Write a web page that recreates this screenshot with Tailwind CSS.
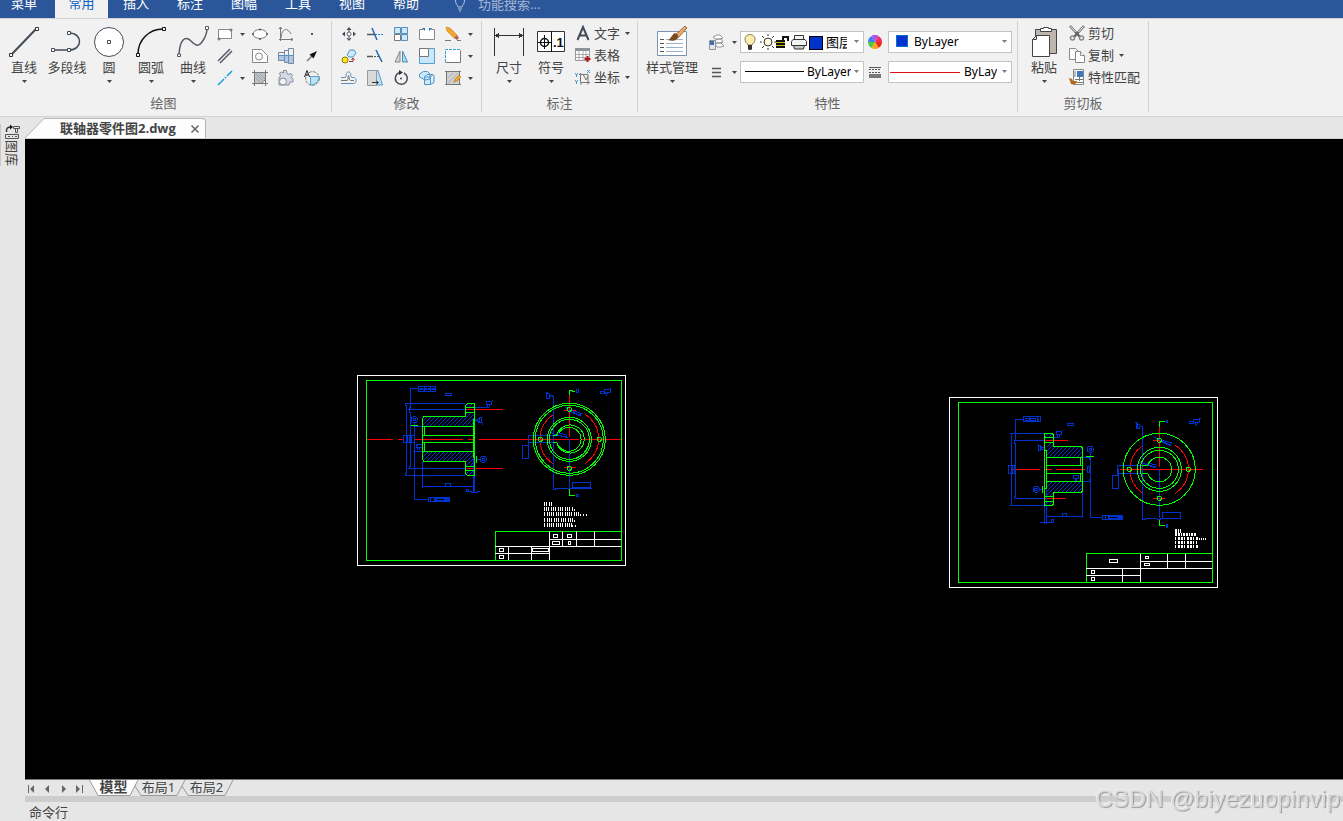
<!DOCTYPE html>
<html lang="zh-CN">

<head>
  <meta charset="UTF-8">
  <meta name="viewport" content="width=device-width, initial-scale=1.0">
  <script src="https://cdn.jsdelivr.net/npm/@tailwindcss/browser@4"></script>
  <title>联轴器零件图2.dwg</title>
</head>

<body class="h-screen flex flex-col overflow-hidden bg-[#e6e6e6] text-[13px] text-[#444] font-['Noto_Sans','Noto_Sans_CJK_SC',sans-serif]">
  <svg class="absolute size-0">
    <symbol id="caret" viewBox="0 0 5 3"><path d="M0 0h5L2.500 3z" fill="#444" /></symbol>
    <pattern id="hatch" width="12" height="12" patternUnits="userSpaceOnUse">
      <path d="M-3 15L15 -3M-3 3L3 -3M9 15L15 9" stroke="#0033cc" stroke-width="3" />
    </pattern>
  </svg>

  <!-- Menu bar -->
  <nav class="h-[18px] shrink-0 flex items-end overflow-hidden bg-[#2b579a] text-white">
    <button class="h-7 w-[55px] pl-[11px] text-left">菜单</button>
    <button class="h-7 w-[53px] mr-px bg-[#f1f1f1] text-[#0f5fc0]">常用</button>
    <button class="h-7 w-[54px]">插入</button>
    <button class="h-7 w-[54px]">标注</button>
    <button class="h-7 w-[54px]">图幅</button>
    <button class="h-7 w-[54px]">工具</button>
    <button class="h-7 w-[54px]">视图</button>
    <button class="h-7 w-[54px]">帮助</button>
    <label class="h-7 ml-[21px] flex items-center gap-3">
      <svg class="w-3 h-4 shrink-0" viewBox="0 0 12 16" fill="none" stroke="#b4c4de"><path d="M4 11C4 9 1.500 8 1.500 5a4.500 4.500 0 0 1 9 0c0 3-2.500 4-2.500 6zM4 13h4M5 15h2" /></svg>
      <input type="text" aria-label="功能搜索" placeholder="功能搜索..." class="w-40 h-7 bg-transparent outline-none placeholder:text-[#a5b6d3]">
    </label>
  </nav>

  <!-- Ribbon -->
  <div class="shrink-0 flex bg-[#f1f1f1] border-t border-b border-[#d2d2d2] h-[99px] pt-[2px] pb-1">

    <!-- Draw -->
    <section class="w-[332px] shrink-0 border-r border-[#d2d2d2] pt-[2px]">
      <div class="flex h-[72px] pl-[2px]">
        <button class="w-11 pt-[2px] flex flex-col items-center">
          <svg class="w-8 h-8" viewBox="0 0 32 32"><path d="M4 29L28 4" stroke="#444b58" stroke-width="2" /><g fill="#fff" stroke="#333"><path d="M1.500 28.500h3v3h-3zM27.500 2.500h3v3h-3z" /></g></svg>
          <span class="mt-px leading-[18px]">直线</span>
          <svg class="mt-1 w-[5px] h-[3px]"><use href="#caret" /></svg>
        </button>
        <button class="w-[42px] pt-[2px] flex flex-col items-center">
          <svg class="w-8 h-8" viewBox="0 0 32 32" fill="none" stroke="#444b58"><path d="M2 25h16c14 0 14-17 0-17" stroke-width="1.500" /><g fill="#fff"><path d="M.5 23.500h3v3h-3zM16.500 23.500h3v3h-3zM16.500 6.500h3v3h-3z" /></g></svg>
          <span class="mt-px leading-[18px] whitespace-nowrap">多段线</span>
        </button>
        <button class="w-[42px] pt-[2px] flex flex-col items-center">
          <svg class="w-8 h-8" viewBox="0 0 32 32" fill="#fff" stroke="#444b58"><circle cx="16" cy="17" r="14.500" /><path d="M14.500 15.500h3v3h-3z" /></svg>
          <span class="mt-px leading-[18px]">圆</span>
          <svg class="mt-1 w-[5px] h-[3px]"><use href="#caret" /></svg>
        </button>
        <button class="w-[42px] pt-[2px] flex flex-col items-center">
          <svg class="w-8 h-8" viewBox="0 0 32 32" fill="none" stroke="#111"><path d="M3 29C3 15 14 4 28 4" stroke-width="1.500" /><g fill="#fff"><path d="M1.500 28.500h3v3h-3zM27.500 2.500h3v3h-3z" /></g></svg>
          <span class="mt-px leading-[18px]">圆弧</span>
          <svg class="mt-1 w-[5px] h-[3px]"><use href="#caret" /></svg>
        </button>
        <button class="w-[42px] pt-[2px] flex flex-col items-center">
          <svg class="w-8 h-8" viewBox="0 0 32 32" fill="none" stroke="#555b66"><path d="M2 29C3 15 8 10 14 16s8 5 11 1 5-9 5-14" stroke-width="1.500" /><g fill="#fff"><path d="M.5 29h3v2.500h-3zM28.500 1.500h3v3h-3z" /></g></svg>
          <span class="mt-px leading-[18px]">曲线</span>
          <svg class="mt-1 w-[5px] h-[3px]"><use href="#caret" /></svg>
        </button>
        <div class="grid grid-cols-[26px_9px_26px_26px_26px] grid-rows-[22px_22px_22px] place-items-center -ml-[2px]">
          <button aria-label="矩形"><svg class="size-4" viewBox="0 0 16 16" fill="#fff" stroke="#8a8a8a"><path d="M1.500 3.500h13v9h-13z" /><circle cx="14" cy="4" r="1" stroke="#555" /><circle cx="2" cy="13" r="1" stroke="#555" /></svg></button>
          <svg class="w-[5px] h-[3px]"><use href="#caret" /></svg>
          <button aria-label="椭圆"><svg class="size-4" viewBox="0 0 16 16" fill="#fff" stroke="#777"><ellipse cx="8" cy="8" rx="7" ry="4.500" /><path d="M.5 7.500h1v1h-1zM14.500 7.500h1v1h-1zM7.500 3h1v1h-1zM7.500 12.500h1v1h-1z" stroke="#555" /></svg></button>
          <button aria-label="公式曲线"><svg class="size-4" viewBox="0 0 16 16" fill="none" stroke="#777"><path d="M2.500 1v14M1 13.500h14M1 3l1.500-2L4 3M13 12l2 1.500L13 15M3 12C4 2 9 1 13 8" /></svg></button>
          <button aria-label="点"><svg class="size-4" viewBox="0 0 16 16"><path d="M7 7h2v2H7z" fill="#555" /></svg></button>

          <button aria-label="平行线"><svg class="size-4" viewBox="0 0 16 16" stroke="#5a5a66" stroke-width="1.500"><path d="M1 13L13 1M3 15L15 3" /></svg></button>
          <span></span>
          <button aria-label="局部放大"><svg class="size-4" viewBox="0 0 16 16" fill="#fff" stroke="#888"><path d="M.5 1.500h9l6 6v7H.5z" /><circle cx="7" cy="8.500" r="3.500" /></svg></button>
          <button aria-label="轴"><svg class="size-4" viewBox="0 0 16 16" stroke="#7d8897"><path d="M.5 4.500h6v8h-6zM6.500 2.500h4v12h-4zM10.500 .5h5v15h-5z" fill="#eef2f6" /><path d="M1 8h5v4H1zM7 8h3v6H7zM11 8h4v7h-4z" fill="#a9c9ea" stroke="none" /><path d="M0 7.500h16" stroke="#5c8fc4" /></svg></button>
          <button aria-label="箭头"><svg class="size-4" viewBox="0 0 16 16"><path d="M3 13L8 8" stroke="#777" stroke-width="1.500" /><path d="M13 3L5.500 6.500l4 4z" fill="#111" /></svg></button>

          <button aria-label="中心线"><svg class="size-4" viewBox="0 0 16 16" stroke="#1a9fd9" stroke-width="1.500"><path d="M1 15l6-6M8 8l1-1M10 6l5-5" /></svg></button>
          <svg class="w-[5px] h-[3px]"><use href="#caret" /></svg>
          <button aria-label="剖面线"><svg class="size-4" viewBox="0 0 16 16" fill="#bcc3c8" stroke="#777"><path d="M2.500 2.500h11v7l-4 4h-7z" /><path d="M0 2.500h16M0 13.500h16M2.500 0v16M13.500 0v16" /><path d="M4 4l8 8M4 8l5 5M8 4l5 5" stroke="#999" stroke-width=".8" /></svg></button>
          <button aria-label="齿轮"><svg class="size-4" viewBox="0 0 16 16" fill="#d3d9e5" stroke="#868e9c"><path d="M1 8l1.500-2-1-3 2-1 2 1V.5h3l.5 3 2 1 2-1 1.500 2-1.500 2 2 1.500v3h-3l-1 3H1z" /><circle cx="5" cy="11.500" r="3.500" fill="#f1f1f1" /></svg></button>
          <button aria-label="文字环绕"><svg class="size-4" viewBox="0 0 16 16" fill="none" stroke="#777"><circle cx="8.500" cy="8.500" r="6.800" stroke-dasharray="3 1" /><path d="M6.500 6.500H15c0 5-4 8.500-8.500 8.500z" fill="#b7e2f8" stroke="#5a9dc8" /><path d="M.5 7L3 .5 5.500 7M1.500 5h3" stroke="#222" /></svg></button>
        </div>
      </div>
      <h2 class="text-center leading-4 text-[#666] -translate-x-[2px]">绘图</h2>
    </section>

    <!-- Modify -->
    <section class="w-[150px] shrink-0 border-r border-[#d2d2d2] pt-[2px]">
      <div class="h-[72px] pl-1">
        <div class="grid grid-cols-[26px_26px_26px_26px_26px_9px] grid-rows-[22px_22px_22px] place-items-center justify-start">
          <button aria-label="平移"><svg class="size-4" viewBox="0 0 16 16" fill="#444b58"><path d="M8 1l2.500 3h-5zM8 15l2.500-3h-5zM1 8l3-2.500v5zM15 8l-3-2.500v5zM7.500 3h1v3h-1zM7.500 10h1v3h-1z" /><circle cx="8" cy="8" r="2" fill="#fff" stroke="#666" /></svg></button>
          <button aria-label="裁剪"><svg class="size-4" viewBox="0 0 16 16" fill="none"><path d="M0 8.500h8" stroke="#555" stroke-width="1.500" /><path d="M8 8.500h8" stroke="#2b7fd0" stroke-dasharray="2 1" /><path d="M5 2l5 12" stroke="#2068b8" stroke-width="1.500" /></svg></button>
          <button aria-label="阵列"><svg class="size-4" viewBox="0 0 16 16" fill="#cdeafc" stroke="#5b8fb9"><path d="M1.500 1.500h6v6h-6zM8.500 1.500h6v6h-6zM8.500 8.500h6v6h-6z" /><path d="M1.500 8.500h6v6h-6z" fill="#fff" stroke="#777" /></svg></button>
          <button aria-label="打断"><svg class="size-4" viewBox="0 0 16 16"><path d="M4 3.500H.5v10h15v-10H12" fill="#fff" stroke="#888" /><path d="M3 2h3v3zM13 2h-3v3z" fill="#1b76c8" /></svg></button>
          <button aria-label="删除"><svg class="size-4" viewBox="0 0 16 16"><path d="M1 1l4 1 7 7-3 3-7-7z" fill="#f2a62a" stroke="#c97f14" stroke-width=".6" /><path d="M9 12l3-3 2 3-2 2z" fill="#a8695a" /><path d="M0 14.500h6M12 14.500h4" stroke="#777" /></svg></button>
          <svg class="w-[5px] h-[3px]"><use href="#caret" /></svg>

          <button aria-label="复制图形"><svg class="size-4" viewBox="0 0 16 16"><path d="M6 7l3-5h4l2 3-3 4H8z" fill="#cdeafc" stroke="#4f95c9" /><circle cx="4" cy="12" r="3" fill="#ffe81a" stroke="#8b7c10" /><path d="M8 13.500h4V11M10.500 12L12 10l1.500 2" fill="none" stroke="#a33" /></svg></button>
          <button aria-label="延伸"><svg class="size-4" viewBox="0 0 16 16" fill="none"><path d="M0 8.500h6" stroke="#555" stroke-width="1.500" /><path d="M7 8.500h5" stroke="#555" stroke-dasharray="2 1" /><path d="M9 2l6 12" stroke="#2068b8" stroke-width="1.500" /></svg></button>
          <button aria-label="镜像"><svg class="size-4" viewBox="0 0 16 16"><path d="M7 3v11H2z" fill="#d4d4d4" stroke="#888" /><path d="M9.500 3v11h5z" fill="#a9d8f6" stroke="#4f8fbd" /></svg></button>
          <button aria-label="缩放"><svg class="size-4" viewBox="0 0 16 16"><path d="M.5 .5h15v15H.5z" fill="#c8e8fb" stroke="#5b9dca" /><path d="M.5 .5h9v8h-9z" fill="#fff" stroke="#777" /></svg></button>
          <button aria-label="拉伸"><svg class="size-4" viewBox="0 0 16 16" fill="none"><path d="M.5 1.500h15v13H.5z" fill="#fff" /><path d="M.5 14.500h15v-12" stroke="#777" /><path d="M.5 14V1.500h15" stroke="#39a0dc" stroke-dasharray="3 1" /></svg></button>
          <svg class="w-[5px] h-[3px]"><use href="#caret" /></svg>

          <button aria-label="等距线"><svg class="size-4" viewBox="0 0 16 16" fill="none"><path d="M0 7.500h4c2 0 0-5.500 3.500-5.500S9 7.500 11 7.500h1.500c3.500 0 3.500 6 0 6H0" stroke="#5b8fb9" /><path d="M0 10.500h6c2 0 .5-5 1.500-5s0 5 2 5H13" stroke="#777" /></svg></button>
          <button aria-label="拉长"><svg class="size-4" viewBox="0 0 16 16"><path d="M9 .5h2L15.500 15H9z" fill="#bfe4f9" stroke="#4f9acb" /><path d="M.5 .5h9v15h-9z" fill="#d9d9d9" stroke="#999" /><path d="M5 12.500h6M9.500 11l2 1.500-2 1.500" fill="none" stroke="#333" /></svg></button>
          <button aria-label="旋转"><svg class="size-4" viewBox="0 0 16 16" fill="none" stroke="#444b58"><path d="M6 2.800A6 6 0 1 0 11 3" stroke-width="1.500" /><path d="M6 0v5l4-2.500z" fill="#333" stroke="none" /><path d="M7.500 8h1v1h-1z" /></svg></button>
          <button aria-label="阵列块"><svg class="size-4" viewBox="0 0 16 16" fill="#cdeafc" stroke="#4f95c9"><path d="M.5 4l4-2.500h4L11 4v5l-5 1-5.500-3zM5.500 7h6v7.500h-6zM5.500 7L8 4.500h6l-2.500 2.500M11.500 14.500l3.500-2V5" /></svg></button>
          <button aria-label="编辑填充"><svg class="size-4" viewBox="0 0 16 16"><path d="M1.500 1.500h13v13h-13z" fill="#d0d0d0" stroke="#777" /><path d="M3 8l5-5M3 13L13 3M8 13l5-5" stroke="#b0b0b0" /><path d="M0 1.500h16M0 14.500h16" stroke="#777" /><path d="M9 12l1-3 4-4 2 2-4 4z" fill="#f2a62a" stroke="#b5711a" stroke-width=".6" /></svg></button>
          <svg class="w-[5px] h-[3px]"><use href="#caret" /></svg>
        </div>
      </div>
      <h2 class="text-center leading-4 text-[#666]">修改</h2>
    </section>

    <!-- Annotate -->
    <section class="w-[156px] shrink-0 border-r border-[#d2d2d2] pt-[2px]">
      <div class="flex h-[72px] pl-[6px]">
        <button class="w-[42px] pt-[2px] flex flex-col items-center">
          <svg class="w-8 h-8" viewBox="0 0 32 32" fill="#333" shape-rendering="crispEdges"><path d="M1 3h1v28H1zM30 3h1v28h-1zM2 10h28v1H2z" /><path d="M2 10.500l4-3v6zM30 10.500l-4-3v6z" /></svg>
          <span class="mt-px leading-[18px]">尺寸</span>
          <svg class="mt-1 w-[5px] h-[3px]"><use href="#caret" /></svg>
        </button>
        <button class="w-[42px] pt-[2px] flex flex-col items-center">
          <svg class="w-8 h-8" viewBox="0 0 32 32" fill="#fff" stroke="#333"><path d="M2.500 6.500h27v20h-27z" /><path d="M16.500 6v21M3 17.500h13M9.500 10v14" stroke="#111" /><circle cx="9.500" cy="17.500" r="4" fill="none" stroke="#111" stroke-width="1.500" /><text x="18" y="22" font-family="Liberation Sans" font-size="13" font-weight="700" fill="#111" stroke="none">.1</text></svg>
          <span class="mt-px leading-[18px]">符号</span>
          <svg class="mt-1 w-[5px] h-[3px]"><use href="#caret" /></svg>
        </button>
        <div class="flex flex-col pl-[3px] -mt-px">
          <button class="h-[22px] flex items-center leading-[18px]">
            <svg class="size-4 mr-[3px]" viewBox="0 0 16 16" fill="none" stroke="#444b58" stroke-width="2"><path d="M2.500 15L8 2l5.500 13M4.500 10.500h7" /></svg>
            文字<svg class="ml-[5px] w-[5px] h-[3px]"><use href="#caret" /></svg>
          </button>
          <button class="h-[22px] flex items-center leading-[18px]">
            <svg class="size-4 mr-[3px]" viewBox="0 0 16 16"><path d="M.5 1.500h14v12H.5z" fill="#fff" stroke="#999" /><path d="M0 1h15v3H0z" fill="#8c939c" /><path d="M4 4v9M8 4v9M11 4v9M1 7.500h14M1 10.500h14" stroke="#aaa" /><path d="M12.500 9v6M9.500 12h6" stroke="#b3161c" stroke-width="2" /></svg>
            表格
          </button>
          <button class="h-[22px] flex items-center leading-[18px]">
            <svg class="size-4 mr-[3px]" viewBox="0 0 16 16" fill="none" stroke="#3f93cf"><path d="M5.500 4v9.500H15M4 5.500h9v10M8 5l3 6 2-4" stroke="#777" /><path d="M0 4l1.500 2L3 4M1.500 6v2M12 1l3 3M15 1l-3 3M0 11l1.500 2L3 11M1.500 13v2M6 14v2" /></svg>
            坐标<svg class="ml-[5px] w-[5px] h-[3px]"><use href="#caret" /></svg>
          </button>
        </div>
      </div>
      <h2 class="text-center leading-4 text-[#666]">标注</h2>
    </section>

    <!-- Properties -->
    <section class="w-[380px] shrink-0 border-r border-[#d2d2d2] pt-[2px]">
      <div class="flex h-[72px] pl-[6px]">
        <button class="w-14 pt-[2px] flex flex-col items-center">
          <svg class="w-8 h-8" viewBox="0 0 32 32"><path d="M1.500 6.500h29v24h-29z" fill="#fff" stroke="#7d93ad" /><path d="M4 14.500h4M4 18.500h4M4 22.500h4M4 26.500h4" stroke="#555" /><path d="M10 14.500h17M10 18.500h17M10 22.500h17M10 26.500h17" stroke="#9eb1c8" /><path d="M29 1l2 2-9 10-4-2z" fill="#e8a86a" stroke="#8a5a30" stroke-width=".8" /><path d="M22 10c1 5-5 7-10 5 3-1 4-6 7-7z" fill="#7b4a1e" /></svg>
          <span class="mt-px leading-[18px] whitespace-nowrap">样式管理</span>
          <svg class="mt-1 w-[5px] h-[3px]"><use href="#caret" /></svg>
        </button>
        <div class="pt-2 pl-2 flex flex-col gap-2">
          <div class="flex items-center h-[22px]">
            <button aria-label="图层" class="flex items-center w-8 gap-2">
              <svg class="size-4" viewBox="0 0 16 16" fill="#fff" stroke="#8d949d"><path d="M5 3l4-2h3l3 3-3 1H7zM6 7l4-2h3l2 3-3 1H8zM7 10l3-1h3l3 3-3 1H9z" /><path d="M1.500 6.500h6v9h-6z" fill="#e3e6ea" /><path d="M2 7h4v4H2z" fill="#3f6ea8" stroke="none" /></svg>
              <svg class="w-[5px] h-[3px] shrink-0"><use href="#caret" /></svg>
            </button>
            <div class="relative w-[124px] h-[22px]">
              <select aria-label="当前图层" class="appearance-none w-full h-full bg-white border border-[#c3c3c3] pl-[85px] pr-4 text-[13px] leading-5 text-black">
                <option>图层2</option>
              </select>
              <div class="absolute inset-y-0 left-1 flex items-center pointer-events-none">
                <svg class="w-3 h-4 mr-1" viewBox="0 0 12 16"><path d="M4 11C3 9 1 8 1 5a5 4.500 0 0 1 10 0c0 3-2 4-3 6z" fill="#ffeeb0" stroke="#88815a" /><path d="M4 11h4v4l-1 1H5l-1-1z" fill="#333" /></svg>
                <svg class="size-4" viewBox="0 0 16 16" stroke="#333"><circle cx="8" cy="8" r="4" fill="#fff8dc" /><path d="M8 0v2M8 14v2M0 8h2M14 8h2M2 2l2 2M12 12l2 2M14 2l-2 2M4 12l-2 2" /></svg>
                <svg class="w-[14px] h-4" viewBox="0 0 14 16" shape-rendering="crispEdges"><path d="M0 6h9v8H0z" fill="#111" /><path d="M0 8h9v1H0zM0 11h9v1H0z" fill="#c6b800" /><path d="M7 6V3h5v4" fill="none" stroke="#111" stroke-width="2" /></svg>
                <svg class="size-4 mx-px" viewBox="0 0 16 16" fill="#f3f3f3" stroke="#333"><path d="M3.500 5V1.500h9V5" /><path d="M2 5.500h12l1.500 2v4h-15v-4z" /><path d="M2.500 11.500h11l-1 3.500h-9z" fill="#bfc9cf" /></svg>
                <span class="size-[14px] mt-[2px] ml-px bg-[#0033cc] border border-black"></span>
              </div>
              <svg class="absolute right-[5px] top-[9px] w-[5px] h-[3px] pointer-events-none opacity-70"><use href="#caret" /></svg>
            </div>
            <button aria-label="颜色" class="ml-1">
              <svg class="size-[14px]" viewBox="0 0 14 14"><path d="M7 7L3.500 .9A7 7 0 0 1 10.500 .9z" fill="#b44fe8" /><path d="M7 7L10.500 .9A7 7 0 0 1 14 7z" fill="#f0305a" /><path d="M7 7h7a7 7 0 0 1-3.500 6.100z" fill="#f02a1a" /><path d="M7 7l3.500 6.100a7 7 0 0 1-7 0z" fill="#ffa41c" /><path d="M7 7l-3.500 6.100A7 7 0 0 1 0 7z" fill="#4cc93c" /><path d="M7 7H0A7 7 0 0 1 3.500 .9z" fill="#3c7ff0" /></svg>
            </button>
            <div class="relative w-[124px] h-[22px] ml-[6px]">
              <select aria-label="当前颜色" class="appearance-none w-full h-full bg-white border border-[#c3c3c3] pl-[25px] pr-4 text-xs leading-5 text-black font-['Noto_Sans',sans-serif]">
                <option>ByLayer</option>
              </select>
              <span class="absolute left-2 top-1 size-3 bg-[#0033cc] border border-[#0a6fd0] pointer-events-none"></span>
              <svg class="absolute right-[5px] top-[9px] w-[5px] h-[3px] pointer-events-none opacity-70"><use href="#caret" /></svg>
            </div>
          </div>
          <div class="flex items-center h-[22px]">
            <button aria-label="线型设置" class="flex items-center w-8 gap-2">
              <svg class="size-4" viewBox="0 0 16 16"><path d="M4 4.500h9M4 8.500h9M4 12.500h9" stroke="#555" stroke-width="1.500" /></svg>
              <svg class="w-[5px] h-[3px] shrink-0"><use href="#caret" /></svg>
            </button>
            <div class="relative w-[124px] h-[22px]">
              <select aria-label="线型" class="appearance-none w-full h-full bg-white border border-[#c3c3c3] pl-[66px] pr-[12px] text-xs leading-5 text-black font-['Noto_Sans',sans-serif]">
                <option>ByLayer</option>
              </select>
              <span class="absolute left-[5px] top-[10px] w-[59px] h-px bg-black pointer-events-none"></span>
              <svg class="absolute right-[5px] top-[9px] w-[5px] h-[3px] pointer-events-none opacity-70"><use href="#caret" /></svg>
            </div>
            <button aria-label="线宽设置" class="ml-1">
              <svg class="size-[14px]" viewBox="0 0 14 14" stroke="#555" shape-rendering="crispEdges"><path d="M1 2.500h12" /><path d="M1 4.500h12M1 7.500h12" stroke-dasharray="2 1" /><path d="M1 9.500h12M1 12h12" stroke-width="2" stroke="#777" /></svg>
            </button>
            <div class="relative w-[124px] h-[22px] ml-[6px]">
              <select aria-label="线宽" class="appearance-none w-full h-full bg-white border border-[#c3c3c3] pl-[75px] pr-[14px] text-xs leading-5 text-black font-['Noto_Sans',sans-serif]">
                <option>ByLayer</option>
              </select>
              <span class="absolute left-[2px] top-[11px] w-[70px] h-px bg-[#e01010] pointer-events-none"></span>
              <svg class="absolute right-[5px] top-[9px] w-[5px] h-[3px] pointer-events-none opacity-70"><use href="#caret" /></svg>
            </div>
          </div>
        </div>
      </div>
      <h2 class="text-center leading-4 text-[#666]">特性</h2>
    </section>

    <!-- Clipboard -->
    <section class="w-[131px] shrink-0 border-r border-[#d2d2d2] pt-[2px]">
      <div class="flex h-[72px] pl-[5px]">
        <button class="w-[42px] pt-[2px] flex flex-col items-center">
          <svg class="w-8 h-8" viewBox="0 0 32 32" stroke="#444"><path d="M7.500 4.500h21v24h-21z" fill="#bdb6ac" /><path d="M12.500 6.500v-3h3v-1h5v1h3v3z" fill="#fff" /><path d="M4.500 14.500l4-4h13v21h-17z" fill="#fff" /><path d="M4.500 14.500h4v-4z" fill="#ddd" /></svg>
          <span class="mt-px leading-[18px]">粘贴</span>
          <svg class="mt-1 w-[5px] h-[3px]"><use href="#caret" /></svg>
        </button>
        <div class="flex flex-col pl-1 -mt-px">
          <button class="h-[22px] flex items-center leading-[18px]">
            <svg class="size-4 mr-[3px]" viewBox="0 0 16 16" fill="none"><path d="M1 1l10 11M15 1L5 12" stroke="#666" stroke-width="2.500" /><path d="M1.500 1.500l5 5.500M14.500 1.500L9.500 7" stroke="#fff" /><circle cx="3.500" cy="13" r="2" stroke="#888" stroke-width="1.500" /><circle cx="12.500" cy="13" r="2" stroke="#888" stroke-width="1.500" /></svg>
            剪切
          </button>
          <button class="h-[22px] flex items-center leading-[18px]">
            <svg class="size-4 mr-[3px]" viewBox="0 0 16 16" fill="#fff" stroke="#888"><path d="M.5 1.500h6l3 3v8h-9z" /><path d="M6.500 4.500h5l4 4v7h-9z" /><path d="M11.500 4.500v4h4" /></svg>
            复制<svg class="ml-[5px] w-[5px] h-[3px]"><use href="#caret" /></svg>
          </button>
          <button class="h-[22px] flex items-center leading-[18px]">
            <svg class="size-4 mr-[3px]" viewBox="0 0 16 16"><path d="M4.500 .5h10v15h-10z" fill="#fff" stroke="#888" /><path d="M8 2h6v6H8z" fill="#3f78b8" /><path d="M6 2v6M6 10.500h8M10.500 8v4M8 13.500h6" stroke="#777" /><path d="M0 9l3 1 1 2 4 0c0 3-3 4-6 3z" fill="#b8661c" /></svg>
            特性匹配
          </button>
        </div>
      </div>
      <h2 class="text-center leading-4 text-[#666]">剪切板</h2>
    </section>
  </div>

  <div class="flex flex-1 min-h-0">
    <!-- Side dock -->
    <aside class="w-[25px] shrink-0 pt-[7px]">
      <button class="w-[19px] border-l border-[#c8c8c8] pl-1 flex flex-col items-center">
        <svg class="w-[15px] h-4" viewBox="0 0 15 16" fill="none" stroke="#333"><path d="M1.500 8C1 4 3 3 6 3" stroke-width="1.500" /><path d="M5 .5v5L8 3z" fill="#111" stroke="none" /><path d="M8.500 2.500h6v2h-6zM10.500 4.500v4h2v-4" stroke="#555" /><path d="M.5 10.500h13v4H.5zM3 12.500h2M7 12.500h1M10 12.500h2" stroke="#555" /></svg>
        <span class="[writing-mode:vertical-rl] [text-orientation:sideways] leading-[14px] text-[13px]">图库</span>
      </button>
    </aside>

    <main class="flex-1 min-w-0 flex flex-col">
      <!-- Document tabs -->
      <div class="h-[22px] shrink-0 flex items-end border-b border-[#cfcfcf]">
        <div class="flex h-5">
          <svg class="w-5 h-5 shrink-0" viewBox="0 0 20 20"><path d="M0 20L19 .5h1V20z" fill="#fdfdfd" /><path d="M0 20L19 .5h1" fill="none" stroke="#b5b5b5" /></svg>
          <div class="flex items-center bg-[#fdfdfd] border-t border-r border-[#b5b5b5] rounded-tr-sm pl-[15px] pr-[5px]">
            <a href="#" class="font-bold text-[13px] leading-4 pb-[2px] w-[130px] whitespace-nowrap font-['Open_Sans','Noto_Sans_CJK_SC',sans-serif]">联轴器零件图2.dwg</a>
            <button aria-label="关闭"><svg class="size-[10px]" viewBox="0 0 10 10" stroke="#666" stroke-width="1.500"><path d="M1.500 1.500l7 7M8.500 1.500l-7 7" /></svg></button>
          </div>
        </div>
      </div>

      <!-- Model space, drawings use thirds of a pixel as units -->
      <div class="relative flex-1 min-h-0 overflow-hidden bg-black">
        <svg class="absolute left-[332px] top-[236px] w-[269px] h-[191px]" viewBox="21 15 807 573" fill="none" stroke-width="3" shape-rendering="crispEdges">
          <path d="M22.500 16.500h804v570h-804z" stroke="#fff" />
          <g fill="url(#hatch)">
            <path d="M220 140H346V127H371V169H220z" />
            <path d="M220 245H371V289H346V274H220z" />
            <path d="M346 101h27v11h-27zM346 301h27v15h-27z" />
          </g>
          <g stroke="#f00">
            <path d="M52 208.500H129M144 208.500H160M193 208.500H339M354 208.500H375M387 208.500H687M696 208.500H814M348 118.500H459M348 295.500H459" />
            <path d="M658.500 76V200M642 121h36M642 292h36" />
            <path d="M609 135A88 88 0 0 0 609 281M705 132A88 88 0 0 1 705 281" />
          </g>
          <g stroke="#03c">
            <path d="M346 100.500H167.500V106H170V310H167.500V316.500H346M174 118.500H346M174 295.500H346M179 112V127H181.500V290H179V295M181.500 118V55.500H205" />
            <path d="M205.500 49.500h51v9h-51zM205.500 58.500v6h51v-6M223 49v15M241 49v15M286.500 70.500h18v6h-18z" />
            <path d="M210 55h44" stroke-dasharray="9 3" />
            <circle cx="193" cy="149" r="9" /><path d="M190 145h6v6h-6z" />
            <path d="M193.500 157V388.500H235M235.500 382.500h63v12h-63zM241 382v12" /><path d="M253 388h46" stroke-width="9" /><path d="M261 388h22" stroke="#000" />
            <path d="M160.500 196.500h33v21h-33zM184 199v18" /><path d="M170 197v20M180 197v20" stroke-width="6" />
            <path d="M190 169.500H222M190 244.500H222M217.500 275V353M217.500 349.500H372M286.500 340.500h15v8h-15zM345 364.500h18v3h20v-3h7M348 358h6v6h-6z" />
            <path d="M372 265V367" stroke-width="6" />
            <path d="M199.500 223.500h18v9h-18zM203 232v9M209 232v9M199 223l6 6M372 112.500H417M409.500 94.500h15v9h-15zM413 103v9M418 103v9M424 95l5-5" />
            <path d="M388.500 142.500h6v15h-6zM388 143l-8 7 8 8M394 157l5 6M372 150h8" />
            <circle cx="400" cy="268" r="9" /><path d="M397 265h6v6h-6zM378 268.500H391" />
            <path d="M610.500 78V357.500H618M615 355.500H651l6 3 4-3H725M667.500 337.500h54v15h-54zM658.500 208V356" />
            <path d="M610 196.500H535.500V226M535 217.500H610M517.500 226.500h18v39h-18z" />
            <path d="M589 66v19h10l3-9 8 3M589 66l12 9M589 70h8v14" />
            <path d="M680.500 58.500h4v8h-4zM680.500 373.500h4v6h-4zM752 64h10v7h-10zM762 58h18v9h-18zM766 67l4 8 4-8M779 60l4-5" />
            <path d="M645 110l8 10 40 17M666 122l28 8-4 8-26-12M599 186l12 6 38 10M622 188l26 6 4 8-24-6" />
          </g>
          <g stroke="#0f0">
            <path d="M49.500 31.500H814.500V571.500H49.500zM436.500 571V484.500H814" />
            <path d="M346.500 139.500H222L217.500 145V269L222 274.500H346.500V311L352 316.500H374.500V100.500H352L346.500 106zM346 112.500h28M346 127.500h28M346 289.500h28M346 301.500h28" />
            <path d="M220 169.500H372M217 196.500H372M217 217.500H372M220 244.500H372M223.500 169V196M223.500 217V244M183 166.500H204M379.500 258V279" />
            <path d="M372 148V265" stroke-width="6" />
            <circle cx="658" cy="208" r="108" /><circle cx="658" cy="208" r="102" />
            <circle cx="658" cy="208" r="66" /><circle cx="658" cy="208" r="60" />
            <path d="M610 196.500H620A42 42 0 1 1 620 217.500H610M626 190A36 36 0 1 1 626 226" />
            <circle cx="658" cy="118" r="6" /><circle cx="658" cy="295" r="6" /><circle cx="571" cy="208" r="6" /><circle cx="748" cy="208" r="6" />
            <path d="M658.500 76V61.500H666V64.500H674M658.500 356V376.500H674" />
          </g>
          <g stroke="#fff">
            <path d="M598.500 484V571M598 508.500H814M436 529.500H814M436 550.500H598M475.500 529V571M544.500 529V571M637.500 484V529M679.500 484V529M733.500 484V529" />
            <path d="M610.500 493.500h12v9h-12zM652.500 493.500h12v9h-12zM607.500 514.500h21v9h-21zM655.500 514.500h6v9h-6zM448.500 535.500h12v9h-12zM448.500 556.500h12v9h-12zM547.500 535.500h48v9h-48z" />
            <g stroke-width="12">
              <path d="M582 402H606" stroke-dasharray="3 3 3 6" />
              <path d="M582 417H672" stroke-dasharray="3 3 3 3 3 6" />
              <path d="M582 432H690" stroke-dasharray="3 6 3 3 3 3 3 3" />
              <path d="M582 450H672" stroke-dasharray="3 6 3 3 3 3" />
              <path d="M582 465H666" stroke-dasharray="3 6 3 3 3 3 3 3" />
            </g>
            <path d="M690 435H717M672 453H681M666 468H684M672 420H675" stroke-width="6" stroke-dasharray="3 6" />
          </g>
        </svg>

        <svg class="absolute left-[924px] top-[258px] w-[269px] h-[191px]" viewBox="12 12 807 573" fill="none" stroke-width="3" shape-rendering="crispEdges">
          <path d="M13.500 13.500h804v570h-804z" stroke="#fff" />
          <g fill="url(#hatch)">
            <path d="M305 148H326V160H411V193H305z" />
            <path d="M305 265H411V298H326V310H305z" />
            <path d="M300 121h26v12h-26zM300 325h26v12h-26z" />
          </g>
          <g stroke="#f00">
            <path d="M300 142.500H369M300 316.500H363M203 229.500H285M300 229.500H321M333 229.500H420M524 229.500H774M643.500 101V222M624 142.500h36M624 316.500h36" />
            <path d="M590 160A86 86 0 0 0 592 300M690 156A86 86 0 0 1 690 302" />
          </g>
          <g stroke="#03c">
            <path d="M195 121.500H299M195 337.500H299M199.500 121V337M299 142.500H208.500V150H211.500V310H208.500V316.500H299M211.500 142V79.500H235" />
            <path d="M235.500 70.500h51v15h-51zM241 76h12v6h-12zM257 76h15v6h-15zM253 70v15M277 70v15M281 78v7M367.500 91.500h18v6h-18zM190.500 217.500h18v24h-18zM202 217v24" />
            <path d="M334.500 115.500h14v8h-14zM337 124v8M343 124v8M323 133.500h18M348 116l6-5M281.500 157.500h5v15h-5zM289 160v12M286 163h12M286 169h12M281 157l-5-4" />
            <circle cx="274" cy="289" r="9" /><path d="M269 287h9v5h-9zM283 289.500h10" />
            <path d="M299.500 337V392M305.500 287V392M285 388.500H326M319.500 379.500h6v8h-6zM305 370.500H412M352.500 361.500h12v8h-12zM412.500 298V375" />
            <path d="M436.500 180V373.500H472M408 193.500H433V201M408 265.500H433V258M427.500 220.500h7v18h-7zM385.500 247.500h15v8h-15zM390 256v8M395 256v8" />
            <circle cx="436" cy="169" r="9" /><path d="M434 166h4v7h-4z" />
            <path d="M472.500 367.500h60v12h-60zM480 367v12" /><path d="M490 373h42" stroke-width="9" /><path d="M494 373h22" stroke="#000" />
            <path d="M592.500 100V382M592 379.500H600V376.500H634L640 379.500H645V376.500H652M652.500 358.500h54v18h-54zM643.500 230V376" />
            <path d="M592 217.500H518.500V247M518 241.500H592M502.500 247.500h18v39h-18zM520.500 229v18" />
            <path d="M574 90v16h9l2-8 7 2M571 88l14 8M577 94v12" />
            <path d="M664 82h4v6h-4zM664 394h4v8h-4zM733 85h12v6h-12zM745 79h18v9h-18zM750 89l4 9 4-9M762 80l4-5" />
            <path d="M624 130l18 10 36 17M652 142l28 8-4 8-24-10M580 208l16 4 34 10M606 210l28 6-4 8-22-8" />
          </g>
          <g stroke="#0f0">
            <path d="M40.500 28.500H802.500V568.500H40.500zM424.500 568V481.500H802" />
            <path d="M298.500 121.500H321L325.500 126V160.500H408L412.500 165V294L408 298.500H325.500V333L321 337.500H298.500zM299 133.500h27M299 148.500h27M299 310.500h27M299 325.500h27M299 172.500H304.500V286.500H299" />
            <path d="M305 193.500H412M305 217.500H412M305 241.500H412M305 265.500H412M406.500 193V217M406.500 241V265M423 190.500H447M292.500 279V300" />
            <circle cx="643" cy="229" r="108" /><circle cx="643" cy="229" r="66" /><circle cx="643" cy="229" r="57" />
            <path d="M592 217.500H608A37 37 0 1 1 608 241.500H592" />
            <circle cx="643" cy="142" r="6" /><circle cx="643" cy="316" r="6" /><circle cx="553" cy="229" r="6" /><circle cx="730" cy="229" r="6" />
            <path d="M643.500 101V85.500H659M643.500 380V397.500H659" />
          </g>
          <g stroke="#fff">
            <path d="M586.500 484V568M586 505.500H802M424 526.500H802M424 547.500H586M532.500 526V568M667.500 484V526M721.500 484V526" />
            <path d="M493.500 499.500h24v9h-24zM601.500 490.500h9v6h-9zM598.500 511.500h15v6h-15zM439.500 532.500h9v9h-9zM439.500 553.500h9v9h-9z" />
            <path d="M690 414H708" stroke-width="12" stroke-dasharray="6 3 3 3" />
            <path d="M690 424.500H756" stroke-width="9" stroke-dasharray="6 3 6 3 3 3" />
            <path d="M690 436.500H762M690 448.500H756M690 460.500H762" stroke-width="9" stroke-dasharray="3 6 6 3 6 3" />
            <path d="M762 438H786" stroke-width="6" stroke-dasharray="3 3" />
          </g>
        </svg>
      </div>

      <!-- Layout tabs -->
      <div class="h-[17px] shrink-0 flex items-start border-t border-[#777] leading-3">
        <div class="flex items-center h-4 w-[64px] pl-[2px] pt-[2px] gap-1">
          <button aria-label="第一个"><svg class="w-3 h-2" viewBox="0 0 12 8" fill="#666"><path d="M1 0h1v8H1zM7 0v8L3 4z" /></svg></button>
          <button aria-label="上一个"><svg class="w-3 h-2" viewBox="0 0 12 8" fill="#666"><path d="M6 0v8L2 4z" /></svg></button>
          <button aria-label="下一个"><svg class="w-3 h-2" viewBox="0 0 12 8" fill="#666"><path d="M3 0v8l4-4z" /></svg></button>
          <button aria-label="最后一个"><svg class="w-3 h-2" viewBox="0 0 12 8" fill="#666"><path d="M1 0v8l4-4zM7 0h1v8H7z" /></svg></button>
        </div>
        <button class="relative w-[49px] h-4 pb-[3px] font-bold text-sm leading-3">
          <svg class="absolute inset-0 w-[49px] h-4" viewBox="0 0 49 16" fill="#fff" stroke="#999"><path d="M.5 0L9 15.500h32L49 0" /></svg>
          <span class="relative">模型</span>
        </button>
        <button class="relative w-[47px] h-4 pb-[3px] pr-[6px]">
          <svg class="absolute inset-0 w-[47px] h-4 overflow-visible" viewBox="0 0 47 16" fill="none" stroke="#999"><path d="M-3 6L3 15.500h36L47 0" /></svg>
          <span class="relative">布局1</span>
        </button>
        <button class="relative w-12 h-4 pb-[3px] pr-[5px]">
          <svg class="absolute inset-0 w-12 h-4 overflow-visible" viewBox="0 0 48 16" fill="none" stroke="#999"><path d="M-3 6L3 15.500h37L48 0" /></svg>
          <span class="relative">布局2</span>
        </button>
      </div>

      <!-- Command line -->
      <div class="h-[6px] shrink-0 bg-[#cdcdcd]"></div>
      <div class="h-[19px] shrink-0 flex items-center pl-1 pt-px">
        <label for="command" class="leading-4">命令行</label>
        <input id="command" type="text" class="flex-1 h-4 ml-2 bg-transparent outline-none">
      </div>
    </main>
  </div>

  <p class="fixed right-[3px] bottom-2 text-2xl leading-7 font-['Liberation_Sans',sans-serif] text-[#dadada] [text-shadow:1px_1px_1px_#999,-1px_-1px_0_#eee] pointer-events-none">CSDN @biyezuopinvip</p>
</body>

</html>
